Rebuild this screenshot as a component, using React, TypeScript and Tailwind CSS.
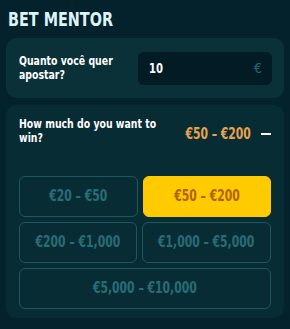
import React from "react";

const F = { fontFamily: '"DejaVu Sans Condensed", "Liberation Sans Narrow", "Liberation Sans", sans-serif' };

function T({ children, className = "" }: { children: React.ReactNode; className?: string }) {
  return <span className={"inline-block whitespace-nowrap scale-x-[0.8] " + className}>{children}</span>;
}

function Opt({ label, active, className = "" }: { label: string; active?: boolean; className?: string }) {
  return (
    <div
      className={
        (active
          ? "bg-[#fecb00] text-[#b3600e] border-[#fecb00] "
          : "border-[#1b5860] text-[#286c77] ") +
        "h-[41px] rounded-[6px] border flex items-center justify-center text-[15px] font-bold " +
        className
      }
    >
      <T className="origin-center">{label}</T>
    </div>
  );
}

export default function App() {
  return (
    <div className="w-[290px] h-[329px] bg-[#03222b] px-[6px] pt-[8px] overflow-hidden" style={F}>
      <h1 className="text-[20px] font-bold leading-[22px] text-[#def4f7] pl-[2px]">
        <T className="origin-left">BET MENTOR</T>
      </h1>
      <div className="mt-[8px] rounded-[10px] bg-[#0a3038] h-[60px] flex items-center pl-[13px] pr-[12px]">
        <div className="w-[118px] text-[13px] font-bold leading-[14px] text-white flex flex-col">
          <T className="block origin-left">Quanto você quer</T>
          <T className="block origin-left">apostar?</T>
        </div>
        <div className="ml-auto w-[134px] h-[33px] rounded-[6px] bg-[#021b24] flex items-center pl-[11px] pr-[10px]">
          <span className="text-[14px] font-bold text-white">
            <T className="origin-left">10</T>
          </span>
          <span className="ml-auto text-[14px] text-[#2b6670]">€</span>
        </div>
      </div>
      <div className="mt-[7px] rounded-[10px] bg-[#082c34] px-[13px] pt-[12px] pb-[9px]">
        <div className="flex items-start">
          <div className="w-[150px] text-[13px] font-bold leading-[14px] text-white flex flex-col">
            <T className="block origin-left">How much do you want to</T>
            <T className="block origin-left">win?</T>
          </div>
          <div className="ml-auto flex items-center pt-[6px]">
            <span className="text-[15px] font-bold text-[#e6a34c] mr-[-4px]">
              <T className="origin-right">€50 – €200</T>
            </span>
            <span className="w-[10px] h-[2px] bg-white ml-[14px] mr-[4px]" />
          </div>
        </div>
        <div className="mt-[30px] flex flex-col gap-[5px]">
          <div className="flex gap-[5px]">
            <Opt label="€20 – €50" className="w-[119px]" />
            <Opt label="€50 – €200" active className="flex-1" />
          </div>
          <div className="flex gap-[5px]">
            <Opt label="€200 – €1,000" className="w-[118px]" />
            <Opt label="€1,000 – €5,000" className="flex-1" />
          </div>
          <Opt label="€5,000 – €10,000" />
        </div>
      </div>
    </div>
  );
}
